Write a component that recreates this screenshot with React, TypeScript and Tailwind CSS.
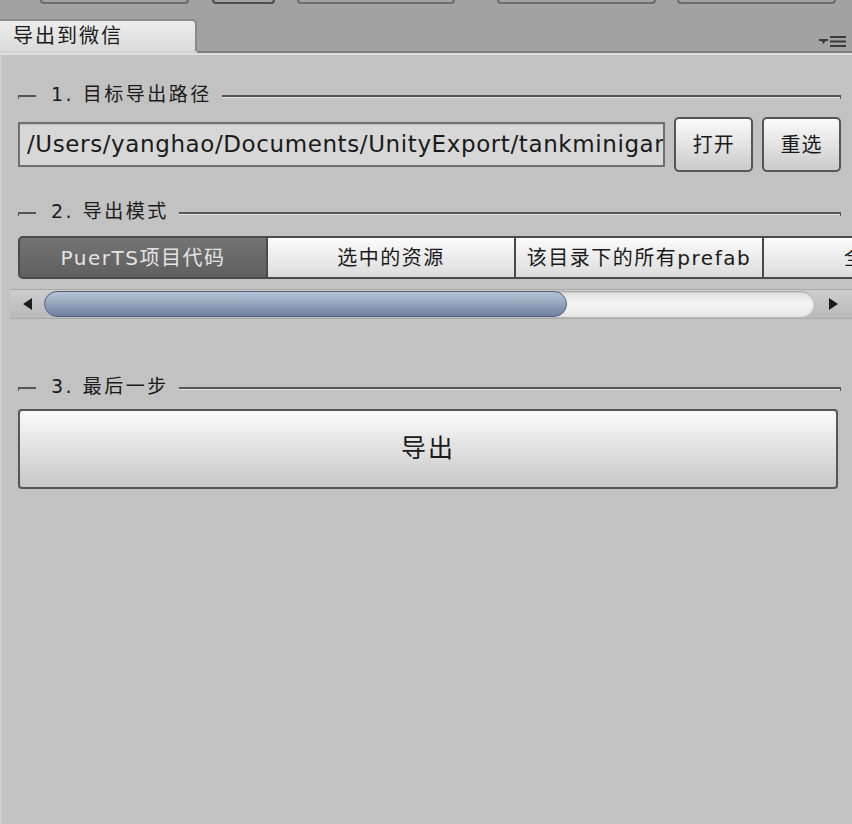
const FONT = "font-['Lucida_Grande','DejaVu_Sans','Noto_Sans_CJK_SC',sans-serif]";

const SectionHeader = ({ title }: { title: string }) => {
  return (
    <div className="flex items-center h-[22px]">
      <div className="w-[18px] mt-[5px] flex flex-col">
        <div className="h-[4px] border-l border-t-2 border-[#555]" />
      </div>
      <span className="pl-[15px] pr-[10px] text-[19px] tracking-[2.5px] text-[#1a1a1a] leading-none whitespace-nowrap">
        {title}
      </span>
      <div className="flex-1 mt-[5px] flex flex-col">
        <div className="h-[4px] border-r border-t-2 border-[#555]" />
        <div className="h-[1px] bg-[#e4e4e4] -mt-[2px] mr-[1px]" />
      </div>
    </div>
  );
};

const SmallButton = ({ label }: { label: string }) => {
  return (
    <button className="w-[79px] h-[55px] rounded-[5px] border-2 border-[#555] bg-gradient-to-b from-[#fbfbfb] to-[#cbcbcb] text-[20px] tracking-[1px] text-[#1a1a1a]">
      {label}
    </button>
  );
};

const modes = ["PuerTS项目代码", "选中的资源", "该目录下的所有prefab", "全部资源"];

const App = () => {
  return (
    <div className={`w-[852px] h-[824px] overflow-hidden bg-[#c2c2c2] ${FONT}`}>
      {/* window tab strip */}
      <div className="h-[51px] bg-[#a2a2a2] flex flex-col">
        <div className="h-[19px] flex items-start">
          <div className="ml-[40px] w-[149px] h-[4px] rounded-b-[4px] border-2 border-t-0 border-[#6c6c6c]" />
          <div className="ml-[23px] w-[63px] h-[4px] rounded-b-[4px] border-2 border-t-0 border-[#4e4e4e]" />
          <div className="ml-[22px] w-[158px] h-[4px] rounded-b-[4px] border-2 border-t-0 border-[#6c6c6c]" />
          <div className="ml-[42px] w-[159px] h-[4px] rounded-b-[4px] border-2 border-t-0 border-[#6c6c6c]" />
          <div className="ml-[21px] w-[159px] h-[4px] rounded-b-[4px] border-2 border-t-0 border-[#6c6c6c]" />
        </div>
        <div className="flex-1 flex items-end justify-between">
          <div className="w-[197px] h-[32px] rounded-tr-[5px] border-t-2 border-r-2 border-[#8a8a8a] bg-gradient-to-b from-[#ededed] to-[#dadada] pl-[13px] flex items-center text-[20px] tracking-[2px] text-[#1a1a1a]">
            导出到微信
          </div>
          <div className="flex items-center gap-[2px] mr-[6px] mb-[4px]">
            <svg width="9" height="6" viewBox="0 0 9 6">
              <path d="M0 0h9v2H6.5L4.5 5 2.5 2H0z" fill="#3a3a3a" />
            </svg>
            <svg width="16" height="11" viewBox="0 0 16 11">
              <rect x="0" y="0" width="16" height="2" fill="#3a3a3a" />
              <rect x="0" y="4.5" width="16" height="2" fill="#3a3a3a" />
              <rect x="0" y="9" width="16" height="2" fill="#3a3a3a" />
            </svg>
          </div>
        </div>
      </div>
      <div className="flex h-[2px]">
        <div className="w-[197px] bg-[#d3d3d3]" />
        <div className="flex-1 bg-[#7e7e7e]" />
      </div>
      <div className="h-[2px] bg-[#dedede]" />

      {/* panel */}
      <div className="border-l-2 border-[#cdcdcd] h-full">
        <div className="pl-[16px] pr-[11px] pt-[28px]">
          <SectionHeader title="1. 目标导出路径" />
          <div className="mt-[12px] flex items-center gap-[9px]">
            <div className="w-[648px] h-[45px] border-2 border-[#6f6f6f] bg-[#d7d7d7] shadow-[inset_0_1px_0_#bdbdbd] overflow-hidden flex items-center pl-[7px]">
              <span className="text-[23px] text-[#1a1a1a] whitespace-nowrap tracking-[0.6px]">
                /Users/yanghao/Documents/UnityExport/tankminigame
              </span>
            </div>
            <SmallButton label="打开" />
            <SmallButton label="重选" />
          </div>
          <div className="mt-[28px]">
            <SectionHeader title="2. 导出模式" />
          </div>
        </div>

        {/* mode toolbar */}
        <div className="pl-[16px] mt-[14px] flex h-[43px] overflow-hidden">
          {modes.map((m, i) => (
            <div
              key={m}
              className={
                i === 0
                  ? "shrink-0 w-[250px] rounded-l-[5px] border-2 border-[#4a4a4a] bg-gradient-to-b from-[#747474] to-[#5f5f5f] text-[#e4e4e4] flex items-center justify-center text-[20px] tracking-[1.5px]"
                  : "shrink-0 w-[248px] border-y-2 border-r-2 border-[#4a4a4a] bg-gradient-to-b from-[#fbfbfb] to-[#dcdcdc] text-[#1a1a1a] flex items-center justify-center text-[20px] tracking-[1.5px]"
              }
            >
              {m}
            </div>
          ))}
        </div>

        {/* horizontal scrollbar */}
        <div className="ml-[8px] mt-[10px] h-[30px] bg-gradient-to-b from-[#cdcdcd] to-[#b9b9b9] border-y border-[#a9a9a9] flex items-center">
          <div className="w-[34px] h-full flex items-center justify-center">
            <svg width="9" height="12" viewBox="0 0 9 12">
              <path d="M9 0v12L0 6z" fill="#1c1c1c" />
            </svg>
          </div>
          <div className="flex-1 h-[26px] rounded-full bg-gradient-to-b from-[#dedede] via-[#f4f4f4] to-[#e6e6e6] shadow-[inset_0_1px_2px_#9a9a9a] flex">
            <div className="w-[523px] h-full rounded-full border border-[#52627e] bg-gradient-to-b from-[#b7c3d6] via-[#95a4bd] to-[#6f809e]" />
          </div>
          <div className="w-[38px] h-full flex items-center justify-center">
            <svg width="9" height="12" viewBox="0 0 9 12">
              <path d="M0 0v12L9 6z" fill="#1c1c1c" />
            </svg>
          </div>
        </div>

        <div className="pl-[16px] pr-[11px] mt-[56px]">
          <SectionHeader title="3. 最后一步" />
          <button className="mt-[12px] w-[820px] h-[80px] rounded-[4px] border-2 border-[#555] bg-gradient-to-b from-[#fafafa] to-[#c8c8c8] text-[25px] tracking-[2px] text-[#1a1a1a]">
            导出
          </button>
        </div>
      </div>
    </div>
  );
};

export default App;
